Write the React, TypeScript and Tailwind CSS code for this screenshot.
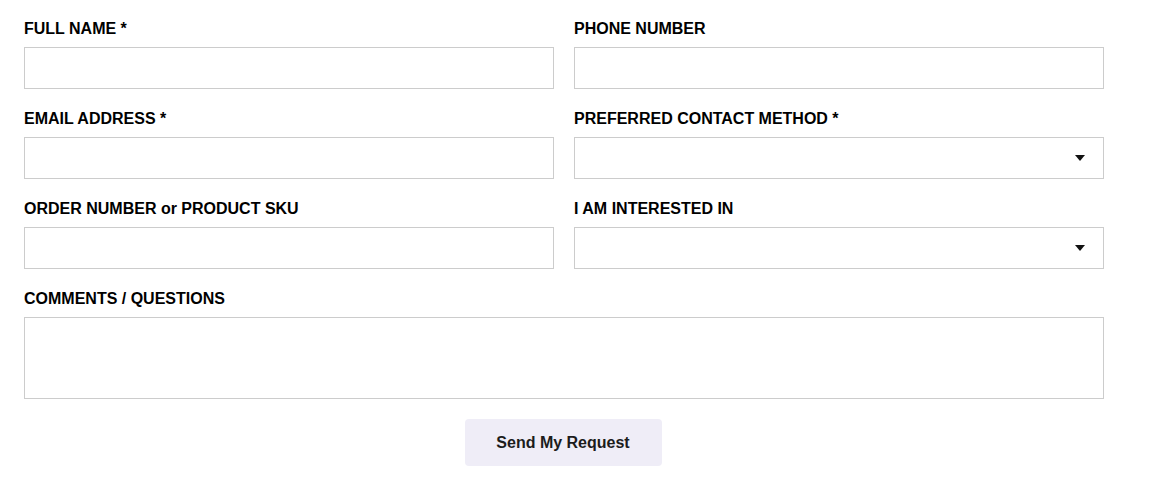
import { ReactNode } from 'react';

function Field({ label, children }: { label: string; children: ReactNode }) {
  return (
    <div className="flex flex-col">
      <label className="text-[16px] leading-[24px] font-bold text-black mb-[6px]">{label}</label>
      {children}
    </div>
  );
}

function TextInput() {
  return <input type="text" className="h-[42px] w-full border border-[#cccccc] bg-white outline-none px-3" />;
}

function SelectBox() {
  return (
    <div className="relative h-[42px] w-full border border-[#cccccc] bg-white">
      <svg className="absolute right-[18px] top-[17px]" width="10" height="6" viewBox="0 0 10 6">
        <path d="M0 0 L10 0 L5 6 Z" fill="#111" />
      </svg>
    </div>
  );
}

export default function App() {
  return (
    <div className="bg-white min-h-screen pt-[17px] pl-[24px]" style={{ fontFamily: '"Liberation Sans", Arial, sans-serif' }}>
      <form className="w-[1080px] flex flex-col">
        <div className="grid grid-cols-2 gap-x-[20px] gap-y-[18px]">
          <Field label="FULL NAME *"><TextInput /></Field>
          <Field label="PHONE NUMBER"><TextInput /></Field>
          <Field label="EMAIL ADDRESS *"><TextInput /></Field>
          <Field label="PREFERRED CONTACT METHOD *"><SelectBox /></Field>
          <Field label="ORDER NUMBER or PRODUCT SKU"><TextInput /></Field>
          <Field label="I AM INTERESTED IN"><SelectBox /></Field>
          <div className="col-span-2">
            <Field label="COMMENTS / QUESTIONS">
              <textarea className="h-[82px] w-full border border-[#cccccc] bg-white outline-none resize-none p-2" />
            </Field>
          </div>
        </div>
        <div className="flex justify-center mt-[20px] pr-[2px]">
          <button type="button" className="w-[197px] h-[47px] rounded-[4px] bg-[#efedf7] text-[#1c1c1c] text-[16px] font-bold">
            Send My Request
          </button>
        </div>
      </form>
    </div>
  );
}
